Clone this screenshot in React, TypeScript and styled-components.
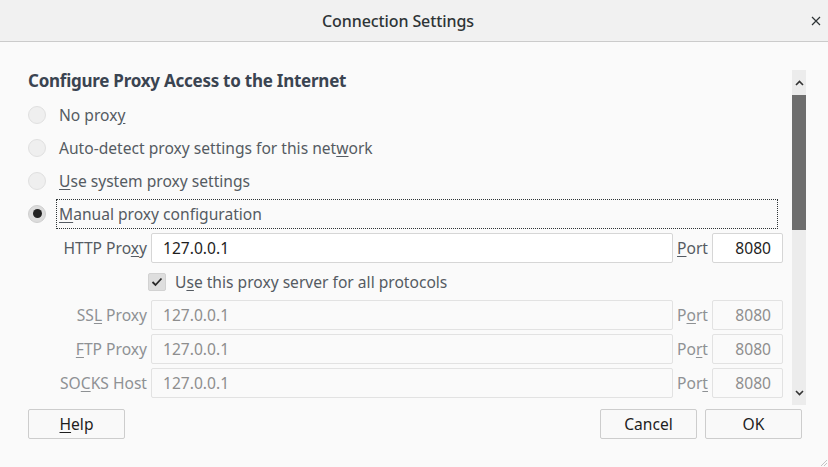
import React from "react";
import styled, { createGlobalStyle } from "styled-components";

const GlobalStyle = createGlobalStyle`
  html, body {
    margin: 0;
    padding: 0;
    background: #fafafa;
  }
  body {
    font-family: "Noto Sans", "Open Sans", sans-serif;
    -webkit-font-smoothing: antialiased;
  }
`;

const Window = styled.div`
  width: 828px;
  height: 467px;
  display: flex;
  flex-direction: column;
  background: #fafafa;
  position: relative;
  overflow: hidden;
`;

const TitleBar = styled.header`
  height: 41px;
  flex: none;
  display: flex;
  align-items: center;
  background: #f1f1f1;
  border-bottom: 1px solid #cbcbcb;
`;

const Title = styled.div`
  flex: 1;
  text-align: center;
  font-size: 16px;
  font-weight: 500;
  color: #2e3436;
  letter-spacing: -0.1px;
`;

const CloseButton = styled.button`
  width: 28px;
  height: 24px;
  margin-right: 4px;
  border: none;
  background: transparent;
  display: flex;
  align-items: center;
  justify-content: flex-end;
  padding: 0 3px 0 0;
`;

const Body = styled.div`
  flex: 1;
  display: flex;
  flex-direction: column;
  padding: 28px 0 0 28px;
`;

const ScrollArea = styled.div`
  height: 335px;
  display: flex;
`;

const Pane = styled.div`
  flex: 1;
  display: flex;
  flex-direction: column;
`;

const Heading = styled.h1`
  margin: 0 0 6px;
  height: 22px;
  line-height: 22px;
  font-size: 17px;
  font-weight: 700;
  color: #3a4451;
  letter-spacing: -0.25px;
`;

const RadioRow = styled.label`
  height: 33px;
  display: flex;
  align-items: center;
  gap: 12px;
  color: #555b62;
  font-size: 15.6px;
`;

const Radio = styled.span<{ checked?: boolean }>`
  width: 18px;
  height: 18px;
  box-sizing: border-box;
  border-radius: 50%;
  border: 1px solid ${(p) => (p.checked ? "#cfcfcf" : "#e0e0e0")};
  background: ${(p) => (p.checked ? "#dcdcdc" : "#efefef")};
  display: flex;
  align-items: center;
  justify-content: center;
  flex: none;

  &::after {
    content: "";
    display: ${(p) => (p.checked ? "block" : "none")};
    width: 9px;
    height: 9px;
    border-radius: 50%;
    background: #222;
  }
`;

const RadioText = styled.span<{ focused?: boolean }>`
  display: flex;
  align-items: center;
  height: 28px;
  padding: 0 2px;
  margin-left: -2px;
  border: 1px dotted ${(p) => (p.focused ? "#2e3436" : "transparent")};
  ${(p) => (p.focused ? "flex: 1; margin-right: 14px;" : "")}
`;

const Key = styled.span`
  text-decoration: underline;
  text-underline-offset: 2px;
`;

const ProxyGrid = styled.div`
  display: grid;
  grid-template-columns: 119px 1fr auto 71px;
  column-gap: 4px;
  row-gap: 4px;
  padding-right: 9px;
  margin-top: 3px;
  align-items: center;
`;

const FieldLabel = styled.span<{ disabled?: boolean }>`
  text-align: right;
  font-size: 15.6px;
  color: ${(p) => (p.disabled ? "#8e9194" : "#555b62")};
  white-space: nowrap;
`;

const TextBox = styled.div<{ disabled?: boolean; align?: "left" | "right" }>`
  height: 30px;
  box-sizing: border-box;
  border: 1px solid ${(p) => (p.disabled ? "#e2e2e2" : "#d6d6d6")};
  border-radius: 2px;
  background: ${(p) => (p.disabled ? "#fafafa" : "#ffffff")};
  color: ${(p) => (p.disabled ? "#8e8e8e" : "#1e1e1e")};
  font-size: 15.6px;
  display: flex;
  align-items: center;
  justify-content: ${(p) => (p.align === "right" ? "flex-end" : "flex-start")};
  padding: ${(p) => (p.align === "right" ? "0 11px 0 0" : "0 0 0 11px")};
`;

const CheckRow = styled.label`
  grid-column: 2 / span 3;
  height: 29px;
  margin-left: -3px;
  display: flex;
  align-items: center;
  gap: 9px;
  font-size: 15.6px;
  color: #555b62;
`;

const CheckBox = styled.span`
  width: 18px;
  height: 18px;
  border-radius: 2px;
  background: #dedede;
  border: 1px solid #d2d2d2;
  box-sizing: border-box;
  display: flex;
  align-items: center;
  justify-content: center;
  flex: none;
`;

const ScrollBar = styled.div`
  width: 14px;
  margin-right: 22px;
  background: #ececec;
  display: flex;
  flex-direction: column;
  align-items: stretch;
`;

const ScrollArrow = styled.div`
  height: 25px;
  display: flex;
  align-items: center;
  justify-content: center;
`;

const Thumb = styled.div`
  height: 135px;
  background: #6e6e6e;
`;

const Track = styled.div`
  flex: 1;
`;

const ButtonRow = styled.div`
  display: flex;
  gap: 8px;
  margin-top: 4px;
  padding-right: 26px;
`;

const Button = styled.button`
  width: 97px;
  height: 30px;
  box-sizing: border-box;
  border: 1px solid #cdcdcd;
  border-radius: 2px;
  background: #f9f9f9;
  font-family: inherit;
  font-size: 15.6px;
  color: #1e1e1e;
  padding: 0;
`;

const Spacer = styled.div`
  flex: 1;
`;

const Grip = styled.svg`
  position: absolute;
  right: 0;
  bottom: 0;
`;

const rows = [
  { label: ["SS", "L", " Proxy"], port: ["P", "o", "rt"] },
  { label: ["", "F", "TP Proxy"], port: ["Po", "r", "t"] },
  { label: ["SO", "C", "KS Host"], port: ["Por", "t", ""] },
];

const Chevron = ({ up }: { up?: boolean }) => (
  <svg width="9" height="6" viewBox="0 0 9 6">
    <path
      d={up ? "M1 5 L4.5 1.5 L8 5" : "M1 1 L4.5 4.5 L8 1"}
      fill="none"
      stroke="#333"
      strokeWidth="1.6"
    />
  </svg>
);

export default function App() {
  return (
    <>
      <GlobalStyle />
      <Window>
        <TitleBar>
          <Title>Connection Settings</Title>
          <CloseButton aria-label="Close">
            <svg width="10" height="10" viewBox="0 0 10 10">
              <path d="M1 1 L9 9 M9 1 L1 9" stroke="#2e3436" strokeWidth="1.2" />
            </svg>
          </CloseButton>
        </TitleBar>
        <Body>
          <ScrollArea>
            <Pane>
              <Heading>Configure Proxy Access to the Internet</Heading>
              <RadioRow>
                <Radio />
                <RadioText>
                  No prox<Key>y</Key>
                </RadioText>
              </RadioRow>
              <RadioRow>
                <Radio />
                <RadioText>
                  Auto-detect proxy settings for this net<Key>w</Key>ork
                </RadioText>
              </RadioRow>
              <RadioRow>
                <Radio />
                <RadioText>
                  <Key>U</Key>se system proxy settings
                </RadioText>
              </RadioRow>
              <RadioRow>
                <Radio checked />
                <RadioText focused>
                  <Key>M</Key>anual proxy configuration
                </RadioText>
              </RadioRow>
              <ProxyGrid>
                <FieldLabel>
                  HTTP Pro<Key>x</Key>y
                </FieldLabel>
                <TextBox>127.0.0.1</TextBox>
                <FieldLabel>
                  <Key>P</Key>ort
                </FieldLabel>
                <TextBox align="right">8080</TextBox>
                <CheckRow>
                  <CheckBox>
                    <svg width="12" height="10" viewBox="0 0 12 10">
                      <path d="M1.5 5 L4.5 8 L10.5 1.5" fill="none" stroke="#2a2a2a" strokeWidth="1.8" />
                    </svg>
                  </CheckBox>
                  <span>
                    U<Key>s</Key>e this proxy server for all protocols
                  </span>
                </CheckRow>
                {rows.map((r, i) => (
                  <React.Fragment key={i}>
                    <FieldLabel disabled>
                      {r.label[0]}
                      <Key>{r.label[1]}</Key>
                      {r.label[2]}
                    </FieldLabel>
                    <TextBox disabled>127.0.0.1</TextBox>
                    <FieldLabel disabled>
                      {r.port[0]}
                      <Key>{r.port[1]}</Key>
                      {r.port[2]}
                    </FieldLabel>
                    <TextBox disabled align="right">
                      8080
                    </TextBox>
                  </React.Fragment>
                ))}
              </ProxyGrid>
            </Pane>
            <ScrollBar>
              <ScrollArrow>
                <Chevron up />
              </ScrollArrow>
              <Thumb />
              <Track />
              <ScrollArrow>
                <Chevron />
              </ScrollArrow>
            </ScrollBar>
          </ScrollArea>
          <ButtonRow>
            <Button>
              <Key>H</Key>elp
            </Button>
            <Spacer />
            <Button>Cancel</Button>
            <Button>OK</Button>
          </ButtonRow>
        </Body>
        <Grip width="10" height="10" viewBox="0 0 10 10">
          <path d="M9 3 L3 9 M9 6 L6 9" stroke="#c4c4c4" strokeWidth="1" />
        </Grip>
      </Window>
    </>
  );
}
